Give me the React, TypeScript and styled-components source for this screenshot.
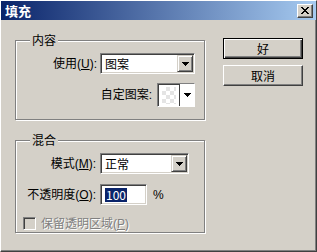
import React from 'react';
import styled, { createGlobalStyle } from 'styled-components';

const FACE = '#D4D0C8';
const SHADOW = '#808080';
const DARK = '#404040';
const NAVY = '#0A246A';

const GlobalStyle = createGlobalStyle`
  html, body {
    margin: 0;
    padding: 0;
    background: ${FACE};
  }
  body {
    font-family: "Liberation Sans", "Noto Sans CJK SC", sans-serif;
    font-size: 12px;
    color: #000;
  }
`;

const Window = styled.div`
  width: 317px;
  height: 252px;
  box-sizing: border-box;
  background: ${FACE};
  border-top: 1px solid #fff;
  border-left: 1px solid #fff;
  border-right: 1px solid ${DARK};
  border-bottom: 1px solid ${DARK};
  box-shadow: inset -1px -1px ${SHADOW};
  display: flex;
  flex-direction: column;
`;

const TitleBar = styled.div`
  height: 19px;
  display: flex;
  align-items: center;
  padding: 0 3px 0 4px;
  background: linear-gradient(to right, ${NAVY}, #a6caf0);
`;

const Title = styled.div`
  flex: 1;
  color: #fff;
  font-weight: bold;
  font-size: 13px;
  line-height: 19px;
  font-family: "Noto Sans CJK SC", sans-serif;
`;

const CloseButton = styled.div`
  width: 16px;
  height: 14px;
  box-sizing: border-box;
  background: ${FACE};
  border: 1px solid;
  border-color: #fff ${DARK} ${DARK} #fff;
  box-shadow: inset -1px -1px ${SHADOW};
  display: flex;
  align-items: center;
  justify-content: center;
`;

const Body = styled.div`
  display: flex;
  align-items: flex-start;
  padding: 18px 0 0 14px;
`;

const LeftCol = styled.div`
  width: 190px;
  margin-top: 2px;
  display: flex;
  flex-direction: column;
  gap: 20px;
`;

const ButtonCol = styled.div`
  margin-left: 18px;
  display: flex;
  flex-direction: column;
  gap: 6px;
`;

const Group = styled.div`
  position: relative;
  box-sizing: border-box;
  width: 190px;
  border: 1px solid ${SHADOW};
  box-shadow: inset 1px 1px #fff, 1px 1px #fff;
`;

const Legend = styled.span`
  position: absolute;
  top: -8px;
  left: 14px;
  padding: 0 2px;
  line-height: 14px;
  background: ${FACE};
  font-family: "Noto Sans CJK SC", sans-serif;
`;

const ContentBody = styled.div`
  display: flex;
  flex-direction: column;
  align-items: flex-end;
  gap: 9px;
  padding: 12px 9px 12px 8px;
`;

const Row = styled.div<{ $gap: number }>`
  display: flex;
  align-items: center;
  gap: ${p => p.$gap}px;
`;

const BlendBody = styled.div`
  display: grid;
  grid-template-columns: 72px auto;
  grid-template-rows: 21px 21px 16px;
  column-gap: 4px;
  row-gap: 10px;
  padding: 12px 8px 1px 8px;
`;

const Label = styled.label`
  display: flex;
  align-items: center;
  justify-content: flex-end;
  white-space: nowrap;
  line-height: 14px;
`;

const Field = styled.div<{ $width: number }>`
  width: ${p => p.$width}px;
  height: 21px;
  box-sizing: border-box;
  background: #fff;
  border: 1px solid;
  border-color: ${SHADOW} #fff #fff ${SHADOW};
  box-shadow: inset 1px 1px ${DARK}, inset -1px -1px ${FACE};
  display: flex;
  align-items: stretch;
  padding: 1px;
`;

const FieldText = styled.div`
  flex: 1;
  display: flex;
  align-items: center;
  padding-left: 3px;
  font-family: "Noto Sans CJK SC", sans-serif;
`;

const ArrowButton = styled.div`
  width: 16px;
  box-sizing: border-box;
  background: ${FACE};
  border: 1px solid;
  border-color: ${FACE} ${DARK} ${DARK} ${FACE};
  box-shadow: inset 1px 1px #fff, inset -1px -1px ${SHADOW};
  display: flex;
  align-items: center;
  justify-content: center;
`;

const Picker = styled.div`
  width: 38px;
  height: 24px;
  box-sizing: border-box;
  display: flex;
  border: 1px solid;
  border-color: ${SHADOW} #fff #fff ${SHADOW};
  box-shadow: inset 1px 1px ${DARK};
  background: #fff;
`;

const Swatch = styled.div`
  flex: 1;
  padding: 3px 3px 2px 4px;
  display: flex;
`;

const Checker = styled.div`
  flex: 1;
  background-color: #fff;
  background-image:
    linear-gradient(45deg, #e4e4e4 25%, transparent 25%, transparent 75%, #e4e4e4 75%),
    linear-gradient(45deg, #e4e4e4 25%, transparent 25%, transparent 75%, #e4e4e4 75%);
  background-size: 8px 8px;
  background-position: 0 0, 4px 4px;
`;

const PickerArrow = styled.div`
  width: 14px;
  border-left: 1px solid ${DARK};
  background: #fff;
  display: flex;
  align-items: center;
  justify-content: center;
`;

const Selected = styled.span`
  background: ${NAVY};
  color: #fff;
  padding: 0 1px;
  line-height: 14px;
`;

const Percent = styled.span`
  margin-left: 6px;
`;

const InlineRow = styled.div`
  display: flex;
  align-items: center;
`;

const CheckRow = styled.div`
  grid-column: 1 / -1;
  display: flex;
  align-items: center;
  gap: 5px;
  margin: 1px 0 0 -1px;
`;

const CheckBox = styled.div`
  width: 13px;
  height: 13px;
  box-sizing: border-box;
  border: 1px solid;
  border-color: ${SHADOW} #fff #fff ${SHADOW};
  box-shadow: inset 1px 1px ${DARK}, inset -1px -1px ${FACE};
  background: ${FACE};
`;

const DisabledText = styled.span`
  color: ${SHADOW};
  text-shadow: 1px 1px #fff;
  line-height: 14px;
`;

const Button = styled.div<{ $default?: boolean }>`
  width: 80px;
  height: 21px;
  box-sizing: border-box;
  display: flex;
  align-items: center;
  justify-content: center;
  background: ${FACE};
  font-family: "Noto Sans CJK SC", sans-serif;
  border: 1px solid;
  border-color: ${p => (p.$default ? '#000' : `#fff ${DARK} ${DARK} #fff`)};
  box-shadow: ${p =>
    p.$default
      ? `inset 1px 1px #fff, inset -1px -1px ${DARK}, inset -2px -2px ${SHADOW}`
      : `inset -1px -1px ${SHADOW}`};
`;

const Arrow = () => (
  <svg width="7" height="4" viewBox="0 0 7 4" shapeRendering="crispEdges">
    <path d="M0 0h7v1H0zM1 1h5v1H1zM2 2h3v1H2zM3 3h1v1H3z" fill="#000" />
  </svg>
);

const CloseIcon = () => (
  <svg width="8" height="7" viewBox="0 0 8 7" shapeRendering="crispEdges">
    <path
      d="M0 0h2v1H0zM6 0h2v1H6zM1 1h2v1H1zM5 1h2v1H5zM2 2h4v1H2zM3 3h2v1H3zM2 4h4v1H2zM1 5h2v1H1zM5 5h2v1H5zM0 6h2v1H0zM6 6h2v1H6z"
      fill="#000"
    />
  </svg>
);

const Key = ({ k }: { k: string }) => <u>{k}</u>;

export default function App() {
  return (
    <>
      <GlobalStyle />
      <Window>
        <TitleBar>
          <Title>填充</Title>
          <CloseButton>
            <CloseIcon />
          </CloseButton>
        </TitleBar>
        <Body>
          <LeftCol>
            <Group>
              <Legend>内容</Legend>
              <ContentBody>
                <Row $gap={3}>
                  <Label>
                    使用(<Key k="U" />):
                  </Label>
                  <Field $width={95}>
                    <FieldText>图案</FieldText>
                    <ArrowButton>
                      <Arrow />
                    </ArrowButton>
                  </Field>
                </Row>
                <Row $gap={5}>
                  <Label>自定图案:</Label>
                  <Picker>
                    <Swatch>
                      <Checker />
                    </Swatch>
                    <PickerArrow>
                      <Arrow />
                    </PickerArrow>
                  </Picker>
                </Row>
              </ContentBody>
            </Group>
            <Group>
              <Legend>混合</Legend>
              <BlendBody>
                <Label>
                  模式(<Key k="M" />):
                </Label>
                <Field $width={89}>
                  <FieldText>正常</FieldText>
                  <ArrowButton>
                    <Arrow />
                  </ArrowButton>
                </Field>
                <Label>
                  不透明度(<Key k="O" />):
                </Label>
                <InlineRow>
                  <Field $width={47}>
                    <FieldText>
                      <Selected>100</Selected>
                    </FieldText>
                  </Field>
                  <Percent>%</Percent>
                </InlineRow>
                <CheckRow>
                  <CheckBox />
                  <DisabledText>
                    保留透明区域(<Key k="P" />)
                  </DisabledText>
                </CheckRow>
              </BlendBody>
            </Group>
          </LeftCol>
          <ButtonCol>
            <Button $default>好</Button>
            <Button>取消</Button>
          </ButtonCol>
        </Body>
      </Window>
    </>
  );
}
